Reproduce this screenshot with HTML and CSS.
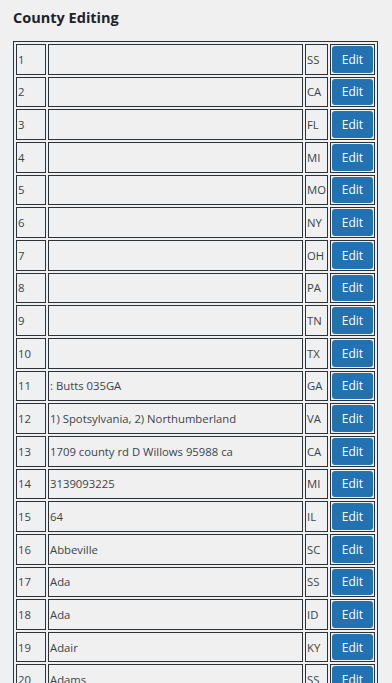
FILE: index.html
```html
<!DOCTYPE html>
<html>
<head>
  <meta charset="utf-8">
  <title>County Editing</title>
  <link rel="stylesheet" href="styles.css">
</head>
<body>
  <div class="wrap">
    <h1>County Editing</h1>

    <table class="county-table">
      <tbody>
        <tr><td class="col-id">1</td><td class="col-name"></td><td class="col-state">SS</td><td class="col-action"><button>Edit</button></td></tr>
        <tr><td class="col-id">2</td><td class="col-name"></td><td class="col-state">CA</td><td class="col-action"><button>Edit</button></td></tr>
        <tr><td class="col-id">3</td><td class="col-name"></td><td class="col-state">FL</td><td class="col-action"><button>Edit</button></td></tr>
        <tr><td class="col-id">4</td><td class="col-name"></td><td class="col-state">MI</td><td class="col-action"><button>Edit</button></td></tr>
        <tr><td class="col-id">5</td><td class="col-name"></td><td class="col-state">MO</td><td class="col-action"><button>Edit</button></td></tr>
        <tr><td class="col-id">6</td><td class="col-name"></td><td class="col-state">NY</td><td class="col-action"><button>Edit</button></td></tr>
        <tr><td class="col-id">7</td><td class="col-name"></td><td class="col-state">OH</td><td class="col-action"><button>Edit</button></td></tr>
        <tr><td class="col-id">8</td><td class="col-name"></td><td class="col-state">PA</td><td class="col-action"><button>Edit</button></td></tr>
        <tr><td class="col-id">9</td><td class="col-name"></td><td class="col-state">TN</td><td class="col-action"><button>Edit</button></td></tr>
        <tr><td class="col-id">10</td><td class="col-name"></td><td class="col-state">TX</td><td class="col-action"><button>Edit</button></td></tr>
        <tr><td class="col-id">11</td><td class="col-name">: Butts 035GA</td><td class="col-state">GA</td><td class="col-action"><button>Edit</button></td></tr>
        <tr><td class="col-id">12</td><td class="col-name">1) Spotsylvania, 2) Northumberland</td><td class="col-state">VA</td><td class="col-action"><button>Edit</button></td></tr>
        <tr><td class="col-id">13</td><td class="col-name">1709 county rd D Willows 95988 ca</td><td class="col-state">CA</td><td class="col-action"><button>Edit</button></td></tr>
        <tr><td class="col-id">14</td><td class="col-name">3139093225</td><td class="col-state">MI</td><td class="col-action"><button>Edit</button></td></tr>
        <tr><td class="col-id">15</td><td class="col-name">64</td><td class="col-state">IL</td><td class="col-action"><button>Edit</button></td></tr>
        <tr><td class="col-id">16</td><td class="col-name">Abbeville</td><td class="col-state">SC</td><td class="col-action"><button>Edit</button></td></tr>
        <tr><td class="col-id">17</td><td class="col-name">Ada</td><td class="col-state">SS</td><td class="col-action"><button>Edit</button></td></tr>
        <tr><td class="col-id">18</td><td class="col-name">Ada</td><td class="col-state">ID</td><td class="col-action"><button>Edit</button></td></tr>
        <tr><td class="col-id">19</td><td class="col-name">Adair</td><td class="col-state">KY</td><td class="col-action"><button>Edit</button></td></tr>
        <tr><td class="col-id">20</td><td class="col-name">Adams</td><td class="col-state">SS</td><td class="col-action"><button>Edit</button></td></tr>
      </tbody>
    </table>
  </div>
</body>
</html>
```

FILE: styles.css
```css
body {
  margin: 0;
  background-color: #f0f0f1;
  color: #3c434a;
  font-family: 'Open Sans', 'Noto Sans', sans-serif;
  font-size: 11.3px;
}
.wrap {
  padding: 8px 13px 20px;
}
h1 {
  margin: 0 0 13px;
  font-size: 14.5px;
  line-height: 20px;
  font-weight: 700;
  color: #1d2327;
}
.county-table {
  width: 365px;
  table-layout: fixed;
  border: 1px solid #2c3338;
  border-spacing: 2px;
}
.county-table td {
  box-sizing: border-box;
  border: 1px solid #2c3338;
  padding: 1px;
  vertical-align: middle;
  white-space: nowrap;
  overflow: hidden;
}
.col-id {
  width: 30px;
}
.col-state {
  width: 23px;
}
.col-action {
  width: 45px;
}
.county-table button {
  display: block;
  width: 100%;
  height: 26.67px;
  padding: 0;
  border: none;
  border-radius: 3px;
  background-color: #2271b1;
  color: #fff;
  font-family: inherit;
  font-size: 12px;
  cursor: pointer;
}
.county-table button:hover {
  background-color: #135e96;
}
```
